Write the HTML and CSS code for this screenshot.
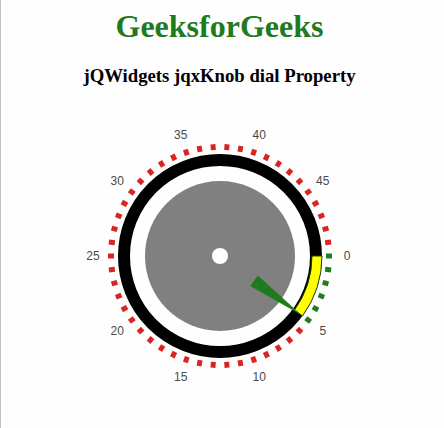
FILE: index.html
```html
<!DOCTYPE html>
<html>
<head>
<meta charset="utf-8">
<link rel="stylesheet" href="styles.css">
</head>
<body>
<div class="page">
  <h1 class="title">GeeksforGeeks</h1>
  <h3 class="subtitle">jQWidgets jqxKnob dial Property</h3>
  <svg class="knob" width="300" height="300" viewBox="0 0 300 300">
    <defs>
      <rect id="tick" x="106" y="-2.5" width="6" height="5"/>
    </defs>
    <g transform="translate(150 150)">
      <g class="ticks-green">
        <use href="#tick" transform="rotate(0)"/>
        <use href="#tick" transform="rotate(7.2)"/>
        <use href="#tick" transform="rotate(14.4)"/>
        <use href="#tick" transform="rotate(21.6)"/>
        <use href="#tick" transform="rotate(28.8)"/>
        <use href="#tick" transform="rotate(36)"/>
      </g>
      <g class="ticks-red">
        <use href="#tick" transform="rotate(43.2)"/>
        <use href="#tick" transform="rotate(50.4)"/>
        <use href="#tick" transform="rotate(57.6)"/>
        <use href="#tick" transform="rotate(64.8)"/>
        <use href="#tick" transform="rotate(72)"/>
        <use href="#tick" transform="rotate(79.2)"/>
        <use href="#tick" transform="rotate(86.4)"/>
        <use href="#tick" transform="rotate(93.6)"/>
        <use href="#tick" transform="rotate(100.8)"/>
        <use href="#tick" transform="rotate(108)"/>
        <use href="#tick" transform="rotate(115.2)"/>
        <use href="#tick" transform="rotate(122.4)"/>
        <use href="#tick" transform="rotate(129.6)"/>
        <use href="#tick" transform="rotate(136.8)"/>
        <use href="#tick" transform="rotate(144)"/>
        <use href="#tick" transform="rotate(151.2)"/>
        <use href="#tick" transform="rotate(158.4)"/>
        <use href="#tick" transform="rotate(165.6)"/>
        <use href="#tick" transform="rotate(172.8)"/>
        <use href="#tick" transform="rotate(180)"/>
        <use href="#tick" transform="rotate(187.2)"/>
        <use href="#tick" transform="rotate(194.4)"/>
        <use href="#tick" transform="rotate(201.6)"/>
        <use href="#tick" transform="rotate(208.8)"/>
        <use href="#tick" transform="rotate(216)"/>
        <use href="#tick" transform="rotate(223.2)"/>
        <use href="#tick" transform="rotate(230.4)"/>
        <use href="#tick" transform="rotate(237.6)"/>
        <use href="#tick" transform="rotate(244.8)"/>
        <use href="#tick" transform="rotate(252)"/>
        <use href="#tick" transform="rotate(259.2)"/>
        <use href="#tick" transform="rotate(266.4)"/>
        <use href="#tick" transform="rotate(273.6)"/>
        <use href="#tick" transform="rotate(280.8)"/>
        <use href="#tick" transform="rotate(288)"/>
        <use href="#tick" transform="rotate(295.2)"/>
        <use href="#tick" transform="rotate(302.4)"/>
        <use href="#tick" transform="rotate(309.6)"/>
        <use href="#tick" transform="rotate(316.8)"/>
        <use href="#tick" transform="rotate(324)"/>
        <use href="#tick" transform="rotate(331.2)"/>
        <use href="#tick" transform="rotate(338.4)"/>
        <use href="#tick" transform="rotate(345.6)"/>
        <use href="#tick" transform="rotate(352.8)"/>
      </g>
      <circle class="ring" r="96"/>
      <path class="progress" d="M102 0 A102 102 0 0 1 82.52 59.95 L74.43 54.08 A92 92 0 0 0 92 0 Z"/>
      <circle class="dial" r="75"/>
      <circle class="hub" r="8"/>
      <polygon class="pointer" transform="rotate(36)" points="42,-6.5 101,0 42,6.5"/>
      <g class="labels">
        <text x="127" y="0">0</text>
        <text x="102.74" y="74.65">5</text>
        <text x="39.24" y="120.78">10</text>
        <text x="-39.24" y="120.78">15</text>
        <text x="-102.74" y="74.65">20</text>
        <text x="-127" y="0">25</text>
        <text x="-102.74" y="-74.65">30</text>
        <text x="-39.24" y="-120.78">35</text>
        <text x="39.24" y="-120.78">40</text>
        <text x="102.74" y="-74.65">45</text>
      </g>
    </g>
  </svg>
</div>
</body>
</html>
```
FILE: styles.css
```css
html {
  background: #ffffff;
}
body {
  margin: 0;
  min-height: 428px;
  border-left: 1px solid #c9c1bb;
  font-family: "Liberation Serif", "Times New Roman", serif;
  background: #fffefe;
}
.page {
  display: flex;
  flex-direction: column;
  align-items: center;
  padding-right: 6px;
}
.title {
  margin: 0;
  padding-top: 8px;
  font-size: 32px;
  line-height: 37px;
  font-weight: bold;
  color: #1e7b1e;
}
.subtitle {
  margin: 20px 0 0;
  font-size: 18.72px;
  line-height: 22px;
  font-weight: bold;
  color: #000;
}
.knob {
  display: block;
  margin-top: 19px;
}
.ticks-green {
  fill: #217d21;
}
.ticks-red {
  fill: #d92424;
}
.ring {
  fill: none;
  stroke: #000;
  stroke-width: 12;
}
.progress {
  fill: #ffff00;
  stroke: #1b3d12;
  stroke-width: 1;
}
.dial {
  fill: #808080;
}
.hub {
  fill: #ffffff;
}
.pointer {
  fill: #1e7b1e;
}
.labels text {
  font-family: "Liberation Sans", Arial, sans-serif;
  font-size: 12px;
  fill: #4a4a4a;
  text-anchor: middle;
  dominant-baseline: central;
}
```
